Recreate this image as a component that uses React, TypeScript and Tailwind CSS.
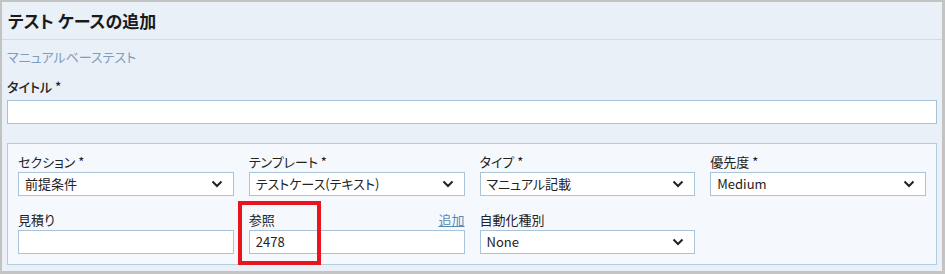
import React from "react";

function Chevron() {
  return (
    <svg width="12" height="8" viewBox="0 0 12 8" className="shrink-0">
      <path d="M1.5 1.5 L6 6 L10.5 1.5" fill="none" stroke="#222" strokeWidth="2" />
    </svg>
  );
}

function Select({ value }: { value: string }) {
  return (
    <div className="flex h-[24px] items-center justify-between border border-[#a9c4da] bg-white pl-[6px] pr-[10px] text-[13px] text-[#222]">
      <span>{value}</span>
      <Chevron />
    </div>
  );
}

function Label({ children }: { children: React.ReactNode }) {
  return <div className="h-[20px] text-[13px] leading-[20px] text-[#222]">{children}</div>;
}

export default function App() {
  return (
    <div className="h-[274px] w-[945px] overflow-hidden bg-[#c3c3c3] pl-[2px] pt-[2px] pr-[3px] pb-[3px] font-['Noto_Sans_CJK_JP','Noto_Sans',sans-serif] [font-feature-settings:'palt']">
      <div className="h-full w-full bg-[#e9f0f8]">
        <div className="flex h-[38px] items-center border-b border-[#cfdde8] px-[6px] text-[17px] font-bold text-[#1a1a1a]">
          テスト ケースの追加
        </div>
        <div className="pl-[5px] pr-[5px]">
          <div className="mt-[9px] text-[13px] leading-[16px] text-[#7e9cbd]">マニュアルベーステスト</div>
          <div className="mt-[13px] text-[13px] leading-[18px] font-medium text-[#222]">タイトル *</div>
          <div className="mt-[4px] h-[24px] border border-[#a9c4da] bg-white"></div>
          <div className="mt-[19px] border border-[#b3cde0] bg-[#f5f9fd] px-[10px] pt-[8px] pb-[10px]">
            <div className="grid grid-cols-4 gap-x-[15px]">
              <div>
                <Label>セクション *</Label>
                <Select value="前提条件" />
              </div>
              <div>
                <Label>テンプレート *</Label>
                <Select value="テストケース(テキスト)" />
              </div>
              <div>
                <Label>タイプ *</Label>
                <Select value="マニュアル記載" />
              </div>
              <div>
                <Label>優先度 *</Label>
                <Select value="Medium" />
              </div>
            </div>
            <div className="mt-[14px] grid grid-cols-4 gap-x-[15px]">
              <div>
                <Label>見積り</Label>
                <div className="h-[24px] border border-[#a9c4da] bg-white"></div>
              </div>
              <div className="relative">
                <div className="flex items-end justify-between">
                  <Label>参照</Label>
                  <span className="text-[13px] leading-[20px] text-[#5a8ab8] underline">追加</span>
                </div>
                <div className="flex h-[24px] items-center border border-[#a9c4da] bg-white pl-[6px] text-[13px] text-[#222]">
                  2478
                </div>
                <div className="absolute left-[-11px] top-[-9px] h-[64px] w-[83px] border-[4px] border-[#e8151f]"></div>
              </div>
              <div>
                <Label>自動化種別</Label>
                <Select value="None" />
              </div>
              <div></div>
            </div>
          </div>
        </div>
      </div>
    </div>
  );
}
